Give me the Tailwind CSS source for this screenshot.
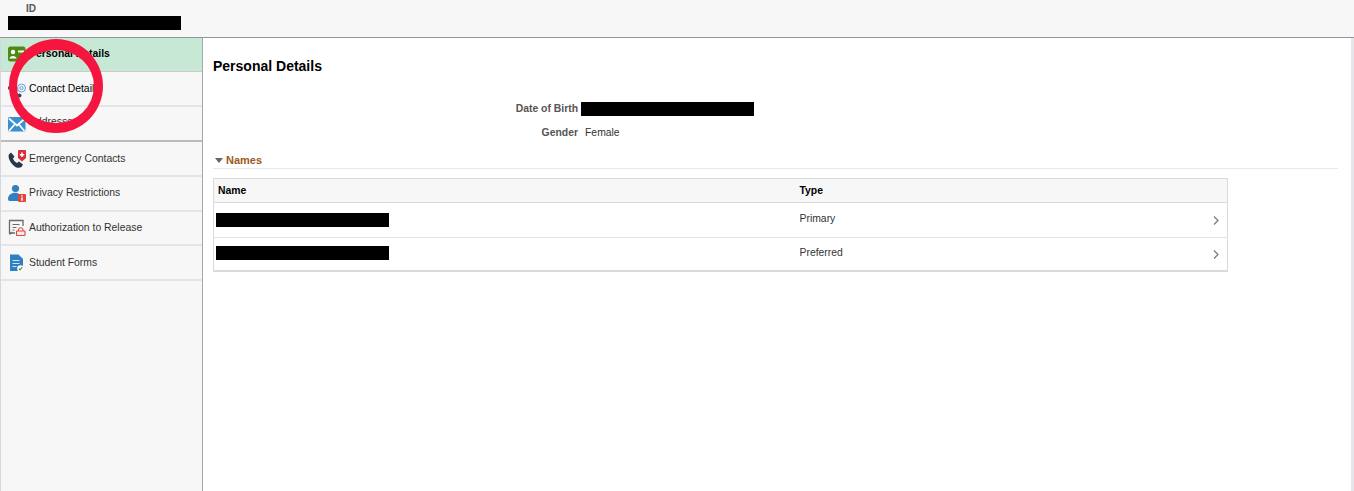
<!DOCTYPE html>
<html lang="en">
<head>
  <meta charset="UTF-8" />
  <title>Personal Details</title>
  <script src="https://cdn.jsdelivr.net/npm/@tailwindcss/browser@4"></script>
</head>
<body class="relative h-[491px] w-[1354px] overflow-hidden bg-white font-['Liberation_Sans',Arial,sans-serif] text-[10.4px] text-[#333]">
  <!-- header -->
  <header class="h-[38px] border-b border-[#8f979b] bg-[#f7f7f7] pl-[8px]">
    <div class="pl-[18px] pt-[3px] text-[10px] font-bold leading-[12px] text-[#555]">ID</div>
    <div class="mt-[1px] h-[14px] w-[173px] bg-black"></div>
  </header>

  <div class="flex h-[453px]">
    <!-- side nav -->
    <nav class="w-[203px] shrink-0 border-r border-l border-r-[#a3a9ac] border-l-[#d5d8da] bg-[#f7f7f7]">
      <a class="flex h-[34px] items-center border-b border-[#c8ccce] bg-[#c8e8d6] pb-[2px] pl-[7px] font-bold text-black">
        <svg class="mr-[3px] h-[18px] w-[18px] shrink-0" viewBox="0 0 18 18"><rect width="17.500" height="15" y="1.500" rx="2.500" fill="#4f8a10"/><circle cx="5" cy="7" r="2.200" fill="#fff"/><path d="M1.500 13.500c0-3.500 7-3.500 7 0z" fill="#fff"/><rect x="10" y="5.500" width="6" height="2" fill="#fff"/></svg>
        <span>Personal Details</span>
      </a>
      <a class="flex h-[35px] items-center border-b-2 border-[#e3e5e6] pl-[7px] text-black">
        <svg class="mr-[3px] h-[20px] w-[18px] shrink-0" viewBox="0 0 18 20"><circle cx="13.500" cy="9" r="4" fill="none" stroke="#5a9fd8" stroke-width="1"/><circle cx="13.500" cy="9" r="1.600" fill="none" stroke="#5a9fd8" stroke-width="1"/><circle cx="11.500" cy="16.500" r="2" fill="#34495e"/><path d="M.8 7.500v3" stroke="#34495e" stroke-width="1.500"/></svg>
        <span>Contact Details</span>
      </a>
      <a class="flex h-[35px] items-center border-b-2 border-[#b8bcbf] pl-[7px] text-[#333]">
        <svg class="mr-[3px] mt-[2px] h-[15px] w-[18px] shrink-0" viewBox="0 0 18 15"><rect width="17.500" height="14.500" rx="1.500" fill="#3b8fd0"/><path d="M1 1.500 9 8.500l8-7M1 14l6-7M16.500 14l-6-7" fill="none" stroke="#fff" stroke-width="1.800"/></svg>
        <span class="pb-[3px]">Addresses</span>
      </a>
      <a class="flex h-[35px] items-center border-b-2 border-[#e3e5e6] pl-[7px]">
        <svg class="mr-[3px] h-[18px] w-[18px] shrink-0" viewBox="0 0 18 18"><path d="M3 2.500.8 4.500C-.2 8 2 12 5 15s6 3.500 8.500 2l1.500-2.500-4-3-2 1.500c-1.500-.500-3.500-2.500-4-4.500l1.500-2z" fill="#26384a"/><path d="M10.500 0h6.500a1 1 0 0 1 1 1v7l-4 3.500L10 8V1a1 1 0 0 1 .500-1z" fill="#d9303a"/><path d="M14 2.500v4.500M11.800 4.800h4.400" stroke="#fff" stroke-width="1.500"/></svg>
        <span>Emergency Contacts</span>
      </a>
      <a class="flex h-[35px] items-center border-b-2 border-[#e3e5e6] pb-[2px] pl-[7px]">
        <svg class="mr-[3px] h-[18px] w-[18px] shrink-0" viewBox="0 0 18 18"><circle cx="7.500" cy="4.500" r="3.600" fill="#2f7fc1"/><path d="M0 15c0-8.500 14-8.500 14 0 0 1.500-1 2-2 2H2c-1 0-2-.500-2-2z" fill="#2f7fc1"/><rect x="10" y="10" width="8" height="8" rx="1" fill="#e0453e"/><path d="M14 11.300v1.200M14 13.500v3.300" stroke="#fff" stroke-width="1.500"/></svg>
        <span>Privacy Restrictions</span>
      </a>
      <a class="flex h-[34px] items-center border-b-2 border-[#e3e5e6] pl-[7px]">
        <svg class="mr-[3px] h-[18px] w-[18px] shrink-0" viewBox="0 0 18 18"><path d="M7 14H1.500V1.500h13.500V7M1.500 15.500l2.500-2.500" fill="none" stroke="#6a6a6a" stroke-width="1.300"/><path d="M4.500 5.500h7M4.500 8.500h4M4.500 11h2" stroke="#6a6a6a" stroke-width="1.100"/><rect x="8.500" y="12" width="8.500" height="4.500" rx=".5" fill="#fdeeee" stroke="#e0453e" stroke-width="1.100"/><path d="M10.500 12v-1.500a2.300 2.300 0 0 1 4.500 0V12" fill="none" stroke="#e0453e" stroke-width="1.100"/></svg>
        <span>Authorization to Release</span>
      </a>
      <a class="flex h-[35px] items-center border-b-2 border-[#e3e5e6] pl-[7px]">
        <svg class="mr-[3px] h-[18px] w-[18px] shrink-0" viewBox="0 0 18 18"><path d="M2 .500h8.500L15 5v12H2z" fill="#2f7fc1"/><path d="M4.500 6.500h7M4.500 9.500h7M4.500 12.500h4" stroke="#cfe4f5" stroke-width="1.100"/><circle cx="12.500" cy="14.500" r="3.300" fill="#fff"/><path d="m10.800 14.500 1.300 1.300 2.200-2.600" fill="none" stroke="#4f9a2a" stroke-width="1.200"/></svg>
        <span>Student Forms</span>
      </a>
    </nav>

    <!-- main content -->
    <main class="flex-1 pl-[10px] pr-[13px] text-[#333]">
      <h1 class="mt-[20px] text-[14px] font-bold leading-[17px] text-black">Personal Details</h1>
      <div class="mt-[27px] grid grid-cols-[365px_1fr] items-center gap-x-[3px] gap-y-[10px]">
        <div class="text-right font-bold leading-[14px] text-[#555]">Date of Birth</div>
        <div class="h-[14px] w-[173px] bg-black"></div>
        <div class="text-right font-bold leading-[14px] text-[#555]">Gender</div>
        <div class="pl-[4px] leading-[14px]">Female</div>
      </div>
      <div class="mt-[13px] flex h-[16px] items-center border-b border-[#e8e9ea] pb-[1px] pl-[2px] text-[11px] font-bold text-[#9b5a25]">
        <svg class="mr-[3px] h-[5px] w-[8px]" viewBox="0 0 8 5"><path d="M0 0h8L4 5z" fill="#666"/></svg>
        Names
      </div>
      <table class="mt-[9px] w-[1015px] table-fixed border border-b-2 border-[#d8dadc]">
        <thead>
          <tr class="h-[24px] border-b border-[#d8dadc] bg-[#f7f7f7] text-left font-bold text-black">
            <th class="w-[586px] pl-[4px] font-bold">Name</th>
            <th class="font-bold">Type</th>
            <th class="w-[26px]"></th>
          </tr>
        </thead>
        <tbody>
          <tr class="h-[35px] border-b border-[#e0e2e3]">
            <td class="pl-[2px]"><div class="h-[14px] w-[173px] bg-black"></div></td>
            <td class="pb-[2px]">Primary</td>
            <td><svg class="ml-[11px] h-[9px] w-[6px]" viewBox="0 0 6 9"><path d="m1 .5 4 4-4 4" fill="none" stroke="#777" stroke-width="1.200"/></svg></td>
          </tr>
          <tr class="h-[33px]">
            <td class="pb-[2px] pl-[2px]"><div class="h-[14px] w-[173px] bg-black"></div></td>
            <td class="pb-[2px]">Preferred</td>
            <td class="pt-[1px]"><svg class="ml-[11px] h-[9px] w-[6px]" viewBox="0 0 6 9"><path d="m1 .5 4 4-4 4" fill="none" stroke="#777" stroke-width="1.200"/></svg></td>
          </tr>
        </tbody>
      </table>
    </main>
    <div class="w-[3px] shrink-0 bg-[#e6e6ea]"></div>
  </div>

  <!-- red annotation ring drawn over the page -->
  <div class="absolute left-[9px] top-[39px] h-[94px] w-[94px] rounded-full border-t-[11px] border-r-[9px] border-b-[10px] border-l-[8px] border-[#f5163f]"></div>
</body>
</html>
